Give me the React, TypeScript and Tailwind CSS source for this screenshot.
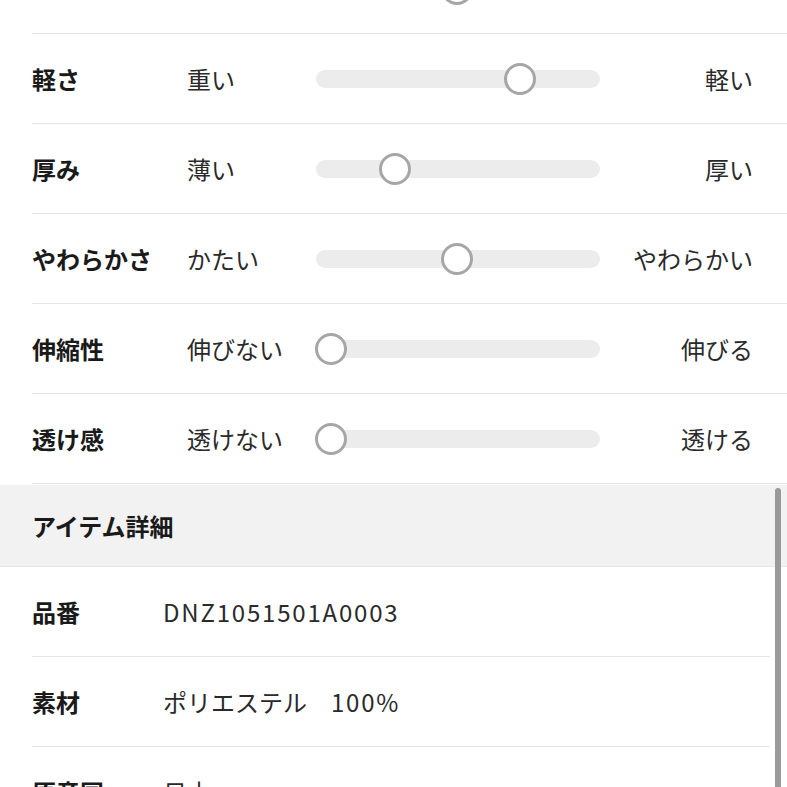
const sliders = [
  { label: "", left: "", right: "", pos: 141 },
  { label: "軽さ", left: "重い", right: "軽い", pos: 204 },
  { label: "厚み", left: "薄い", right: "厚い", pos: 79 },
  { label: "やわらかさ", left: "かたい", right: "やわらかい", pos: 141 },
  { label: "伸縮性", left: "伸びない", right: "伸びる", pos: 15 },
  { label: "透け感", left: "透けない", right: "透ける", pos: 15 },
];

function SliderRow({ label, left, right, pos }: { label: string; left: string; right: string; pos: number }) {
  return (
    <div className="ml-8 flex h-[90px] items-center border-b border-[#e6e6e6] pr-[34px]">
      <div className="w-[155px] font-bold text-[#1a1a1a]">{label}</div>
      <div className="w-[129px] text-[#2a2a2a]">{left}</div>
      <div className="relative h-[18px] w-[284px] rounded-full bg-[#ececec]">
        <div
          className="absolute top-1/2 h-[32px] w-[32px] -translate-x-1/2 -translate-y-1/2 rounded-full border-[3px] border-[#a6a6a6] bg-white"
          style={{ left: pos }}
        />
      </div>
      <div className="flex-1 text-right text-[#2a2a2a]">{right}</div>
    </div>
  );
}

function DetailRow({ label, children }: { label: string; children: React.ReactNode }) {
  return (
    <div className="ml-8 flex h-[90px] items-center border-b border-[#e6e6e6]">
      <div className="w-[131px] font-bold text-[#1a1a1a]">{label}</div>
      <div className="text-[#2a2a2a]">{children}</div>
    </div>
  );
}

export default function App() {
  return (
    <div
      className="relative h-[787px] w-[787px] overflow-hidden bg-white text-[24px] leading-none"
      style={{ fontFamily: '"Noto Sans CJK JP", "Noto Sans", sans-serif' }}
    >
      <div className="-mt-[56px]">
        {sliders.map((s, i) => (
          <SliderRow key={i} {...s} />
        ))}
      </div>

      <div className="mt-px flex h-[82px] items-center border-b border-[#e6e6e6] bg-[#f2f2f2] pl-8 font-bold text-[#1a1a1a]">
        アイテム詳細
      </div>

      <div className="pr-[17px]">
        <DetailRow label="品番">
          <span className="tracking-[1.8px]">DNZ1051501A0003</span>
        </DetailRow>
        <DetailRow label="素材">
          ポリエステル{"\u3000"}
          <span className="tracking-[1.8px]">100%</span>
        </DetailRow>
        <DetailRow label="原産国">日本</DetailRow>
      </div>

      <div className="absolute right-[6px] top-[488px] h-[320px] w-[6px] rounded-full bg-[#9a9a9a]" />
    </div>
  );
}
